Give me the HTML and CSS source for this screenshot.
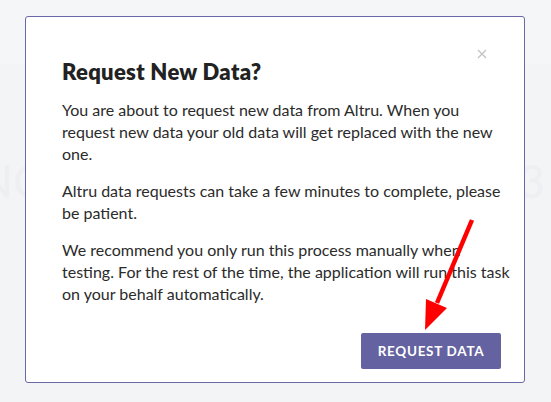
FILE: index.html
```html
<!DOCTYPE html>
<html>
<head>
<meta charset="utf-8">
<link rel="stylesheet" href="styles.css">
</head>
<body>
<div class="page">
  <div class="page-header"></div>
  <div class="page-ghost">
    <span class="ghost-left">NO</span>
    <span class="ghost-right">3</span>
  </div>
</div>
<div class="modal">
  <div class="modal-top">
    <button class="close" aria-label="Close">
      <svg width="10" height="10" viewBox="0 0 10 10"><path d="M1 1L9 9M9 1L1 9" stroke="#c4c4c4" stroke-width="1.4" fill="none"/></svg>
    </button>
  </div>
  <h2 class="title">Request New Data?</h2>
  <p class="text">You are about to request new data from Altru. When you<br>request new data your old data will get replaced with the new<br>one.</p>
  <p class="text">Altru data requests can take a few minutes to complete, please<br>be patient.</p>
  <p class="text">We recommend you only run this process manually when<br>testing. For the rest of the time, the application will run this task<br>on your behalf automatically.</p>
  <div class="modal-footer">
    <button class="primary">REQUEST DATA</button>
  </div>
</div>
<svg class="arrow" width="551" height="402" viewBox="0 0 551 402">
  <line x1="472" y1="220" x2="437" y2="303" stroke="#ff0000" stroke-width="4.5"/>
  <polygon points="425,330 426,299 447,308" fill="#ff0000"/>
</svg>
</body>
</html>
```

FILE: styles.css
```css
html, body {
  margin: 0;
  padding: 0;
}
body {
  width: 551px;
  height: 402px;
  overflow: hidden;
  background: #f3f4f6;
  font-family: "Lato", "Liberation Sans", sans-serif;
  position: relative;
}
.page-header {
  height: 64px;
  background: #f5f6f8;
}
.page-ghost {
  display: flex;
  justify-content: space-between;
  padding: 94px 6px 0 0;
  font-size: 46px;
  line-height: 46px;
  color: #eeeff2;
  font-family: "Lato", sans-serif;
}
.ghost-left {
  margin-left: -22px;
}
.modal {
  position: absolute;
  left: 25px;
  top: 16px;
  width: 500px;
  height: 367px;
  box-sizing: border-box;
  background: #ffffff;
  border: 1px solid #6b68a8;
  border-radius: 3px;
  padding: 32px 23px 13px 36px;
  display: flex;
  flex-direction: column;
}
.modal-top {
  display: flex;
  justify-content: flex-end;
  padding-right: 14px;
  height: 10px;
}
.close {
  border: 0;
  background: none;
  padding: 0;
  width: 10px;
  height: 10px;
  display: block;
}
.close svg {
  display: block;
}
.title {
  margin: 0;
  font-size: 22px;
  line-height: 26px;
  font-weight: 800;
  letter-spacing: 0.3px;
  color: #222222;
}
.text {
  margin: 15px 0 0;
  margin-right: -23px;
  font-size: 16px;
  line-height: 22px;
  color: #2b2b2b;
  white-space: nowrap;
}
.title + .text {
  margin-top: 14px;
}
.modal-footer {
  display: flex;
  justify-content: flex-end;
  margin-top: auto;
}
.primary {
  background: #6462a0;
  color: #ffffff;
  border: 0;
  border-radius: 2px;
  width: 140px;
  height: 36px;
  font-family: "Lato", sans-serif;
  font-size: 13.5px;
  font-weight: 700;
  letter-spacing: 0.7px;
  padding: 0;
}
.arrow {
  position: absolute;
  left: 0;
  top: 0;
  pointer-events: none;
}
```
